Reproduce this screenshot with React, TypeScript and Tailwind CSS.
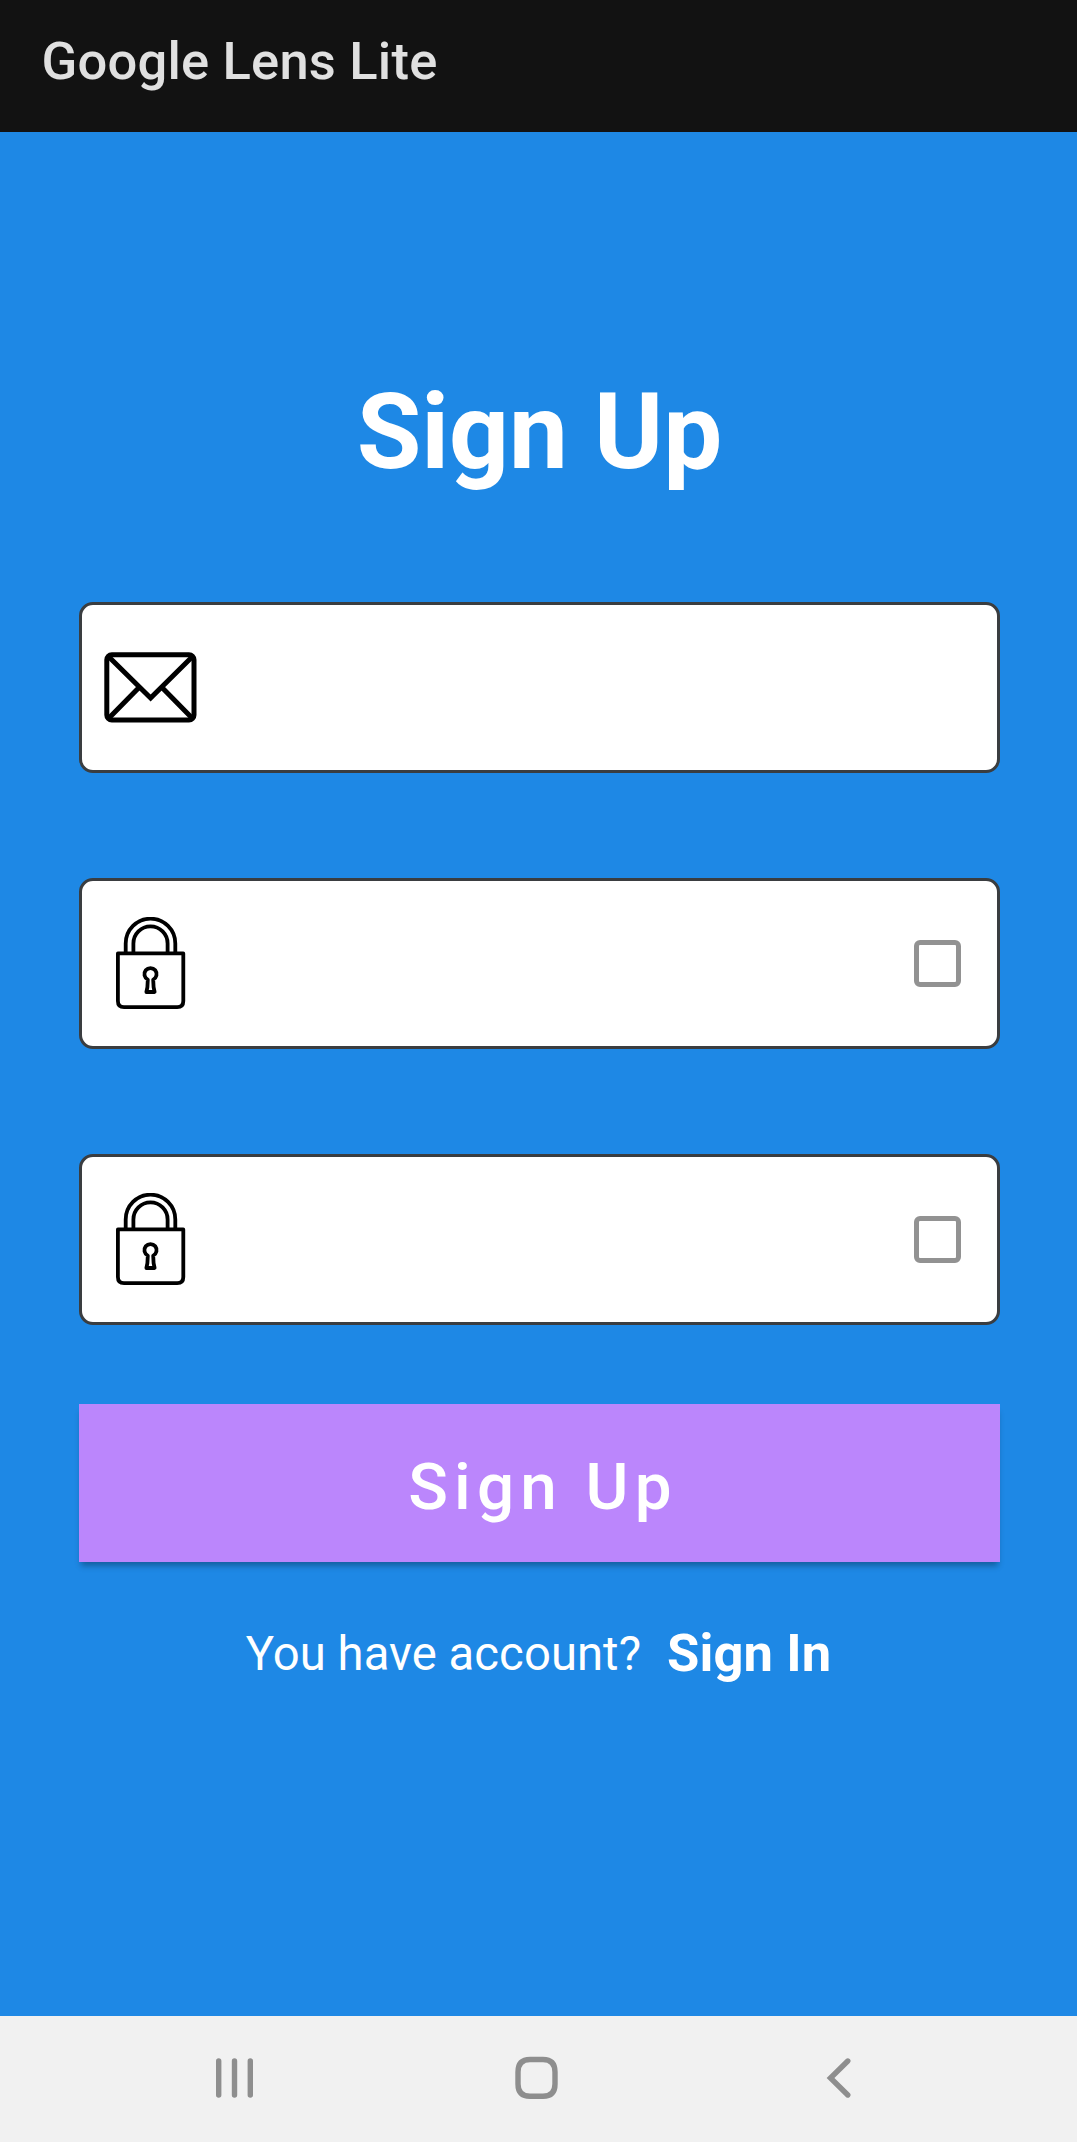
import type { ReactNode } from "react";

function MailIcon() {
  return (
    <svg width="93" height="71" viewBox="104 651.5 93 71" fill="none" stroke="#000" strokeWidth="5" className="ml-[22px] shrink-0">
      <rect x="106.8" y="654.3" width="87.2" height="65.2" rx="5" />
      <path d="M109 656.5L150.6 697.5L192 656.5M109 717.5L138.5 687.5M162.5 687.5L192 717.5" />
    </svg>
  );
}

function LockIcon() {
  return (
    <svg width="70" height="93" viewBox="116 917 70 93" fill="none" stroke="#000" strokeWidth="3.8" className="ml-[34px] shrink-0">
      <path d="M117.9 953.4H183.3V1001Q183.3 1007.1 177.2 1007.1H124Q117.9 1007.1 117.9 1001Z" strokeLinejoin="round" />
      <path d="M125.7 952V943.5A24.7 24.7 0 0 1 175.3 943.5V952M133.4 952V943.5A17.1 17.1 0 0 1 167.6 943.5V952" />
      <path d="M147.8 979.6A6.1 6.1 0 1 1 153.2 979.6L153.6 987.2L154.6 992H146.4L147.4 987.2Z" strokeLinejoin="round" />
    </svg>
  );
}

function Field({ icon, toggle }: { icon: ReactNode; toggle?: boolean }) {
  return (
    <div className="mr-[76.7px] ml-[78.6px] flex h-[170.6px] items-center justify-between rounded-[14px] border-[3px] border-[#3a3d40] bg-white">
      {icon}
      {toggle && <span className="mr-[36px] size-[47.5px] rounded-[6px] border-[5px] border-[#929292]" />}
    </div>
  );
}

export default function App() {
  return (
    <div className="flex h-[2142px] w-[1077px] flex-col bg-[#1e88e5] font-[Roboto,sans-serif] text-white">
      <header className="flex h-[132px] shrink-0 items-start bg-[#121212] pt-[31px] pl-[41.5px]">
        <h1 className="text-[52.5px] leading-[61px] font-medium tracking-[0.2px] text-[#e0e0e0]">Google Lens Lite</h1>
      </header>
      <main className="flex flex-1 flex-col">
        <h2 className="mt-[239px] pl-[2px] text-center text-[105px] leading-[124px] font-bold">Sign Up</h2>
        <form className="mt-[107px] flex flex-col">
          <div className="flex flex-col gap-[105.4px]">
            <Field icon={<MailIcon />} />
            <Field icon={<LockIcon />} toggle />
            <Field icon={<LockIcon />} toggle />
          </div>
          <button
            type="button"
            className="mr-[76.7px] ml-[78.6px] mt-[79.4px] h-[158px] bg-[#bb86fc] pt-[7px] pl-[7px] text-[65.6px] leading-[77px] font-medium tracking-[6.2px] shadow-[0_6px_6px_-2px_rgba(0,0,0,0.3)]"
          >
            Sign Up
          </button>
        </form>
        <p className="mt-[60px] flex items-baseline justify-center">
          <span className="text-[47.25px] leading-[56px] tracking-[0.05px]">You have account?</span>
          <a className="relative top-px ml-[26px] text-[52.5px] leading-[61px] font-bold tracking-[0.1px]">Sign In</a>
        </p>
      </main>
      <nav className="flex h-[126px] shrink-0 bg-[#f1f1f1]">
        <svg width="1077" height="126" viewBox="0 2016 1077 126" fill="none" stroke="#8e8e8e" strokeWidth="5.4" strokeLinecap="round">
          <path d="M218.7 2061V2095M234.5 2061V2095M250.3 2061V2095" />
          <path d="M530 2059.5H543Q555 2059.5 555 2072V2084Q555 2096.3 543 2096.3H530Q518 2096.3 518 2084V2072Q518 2059.5 530 2059.5Z" />
          <path d="M847.8 2061L830.5 2078L847.8 2095" />
        </svg>
      </nav>
    </div>
  );
}
